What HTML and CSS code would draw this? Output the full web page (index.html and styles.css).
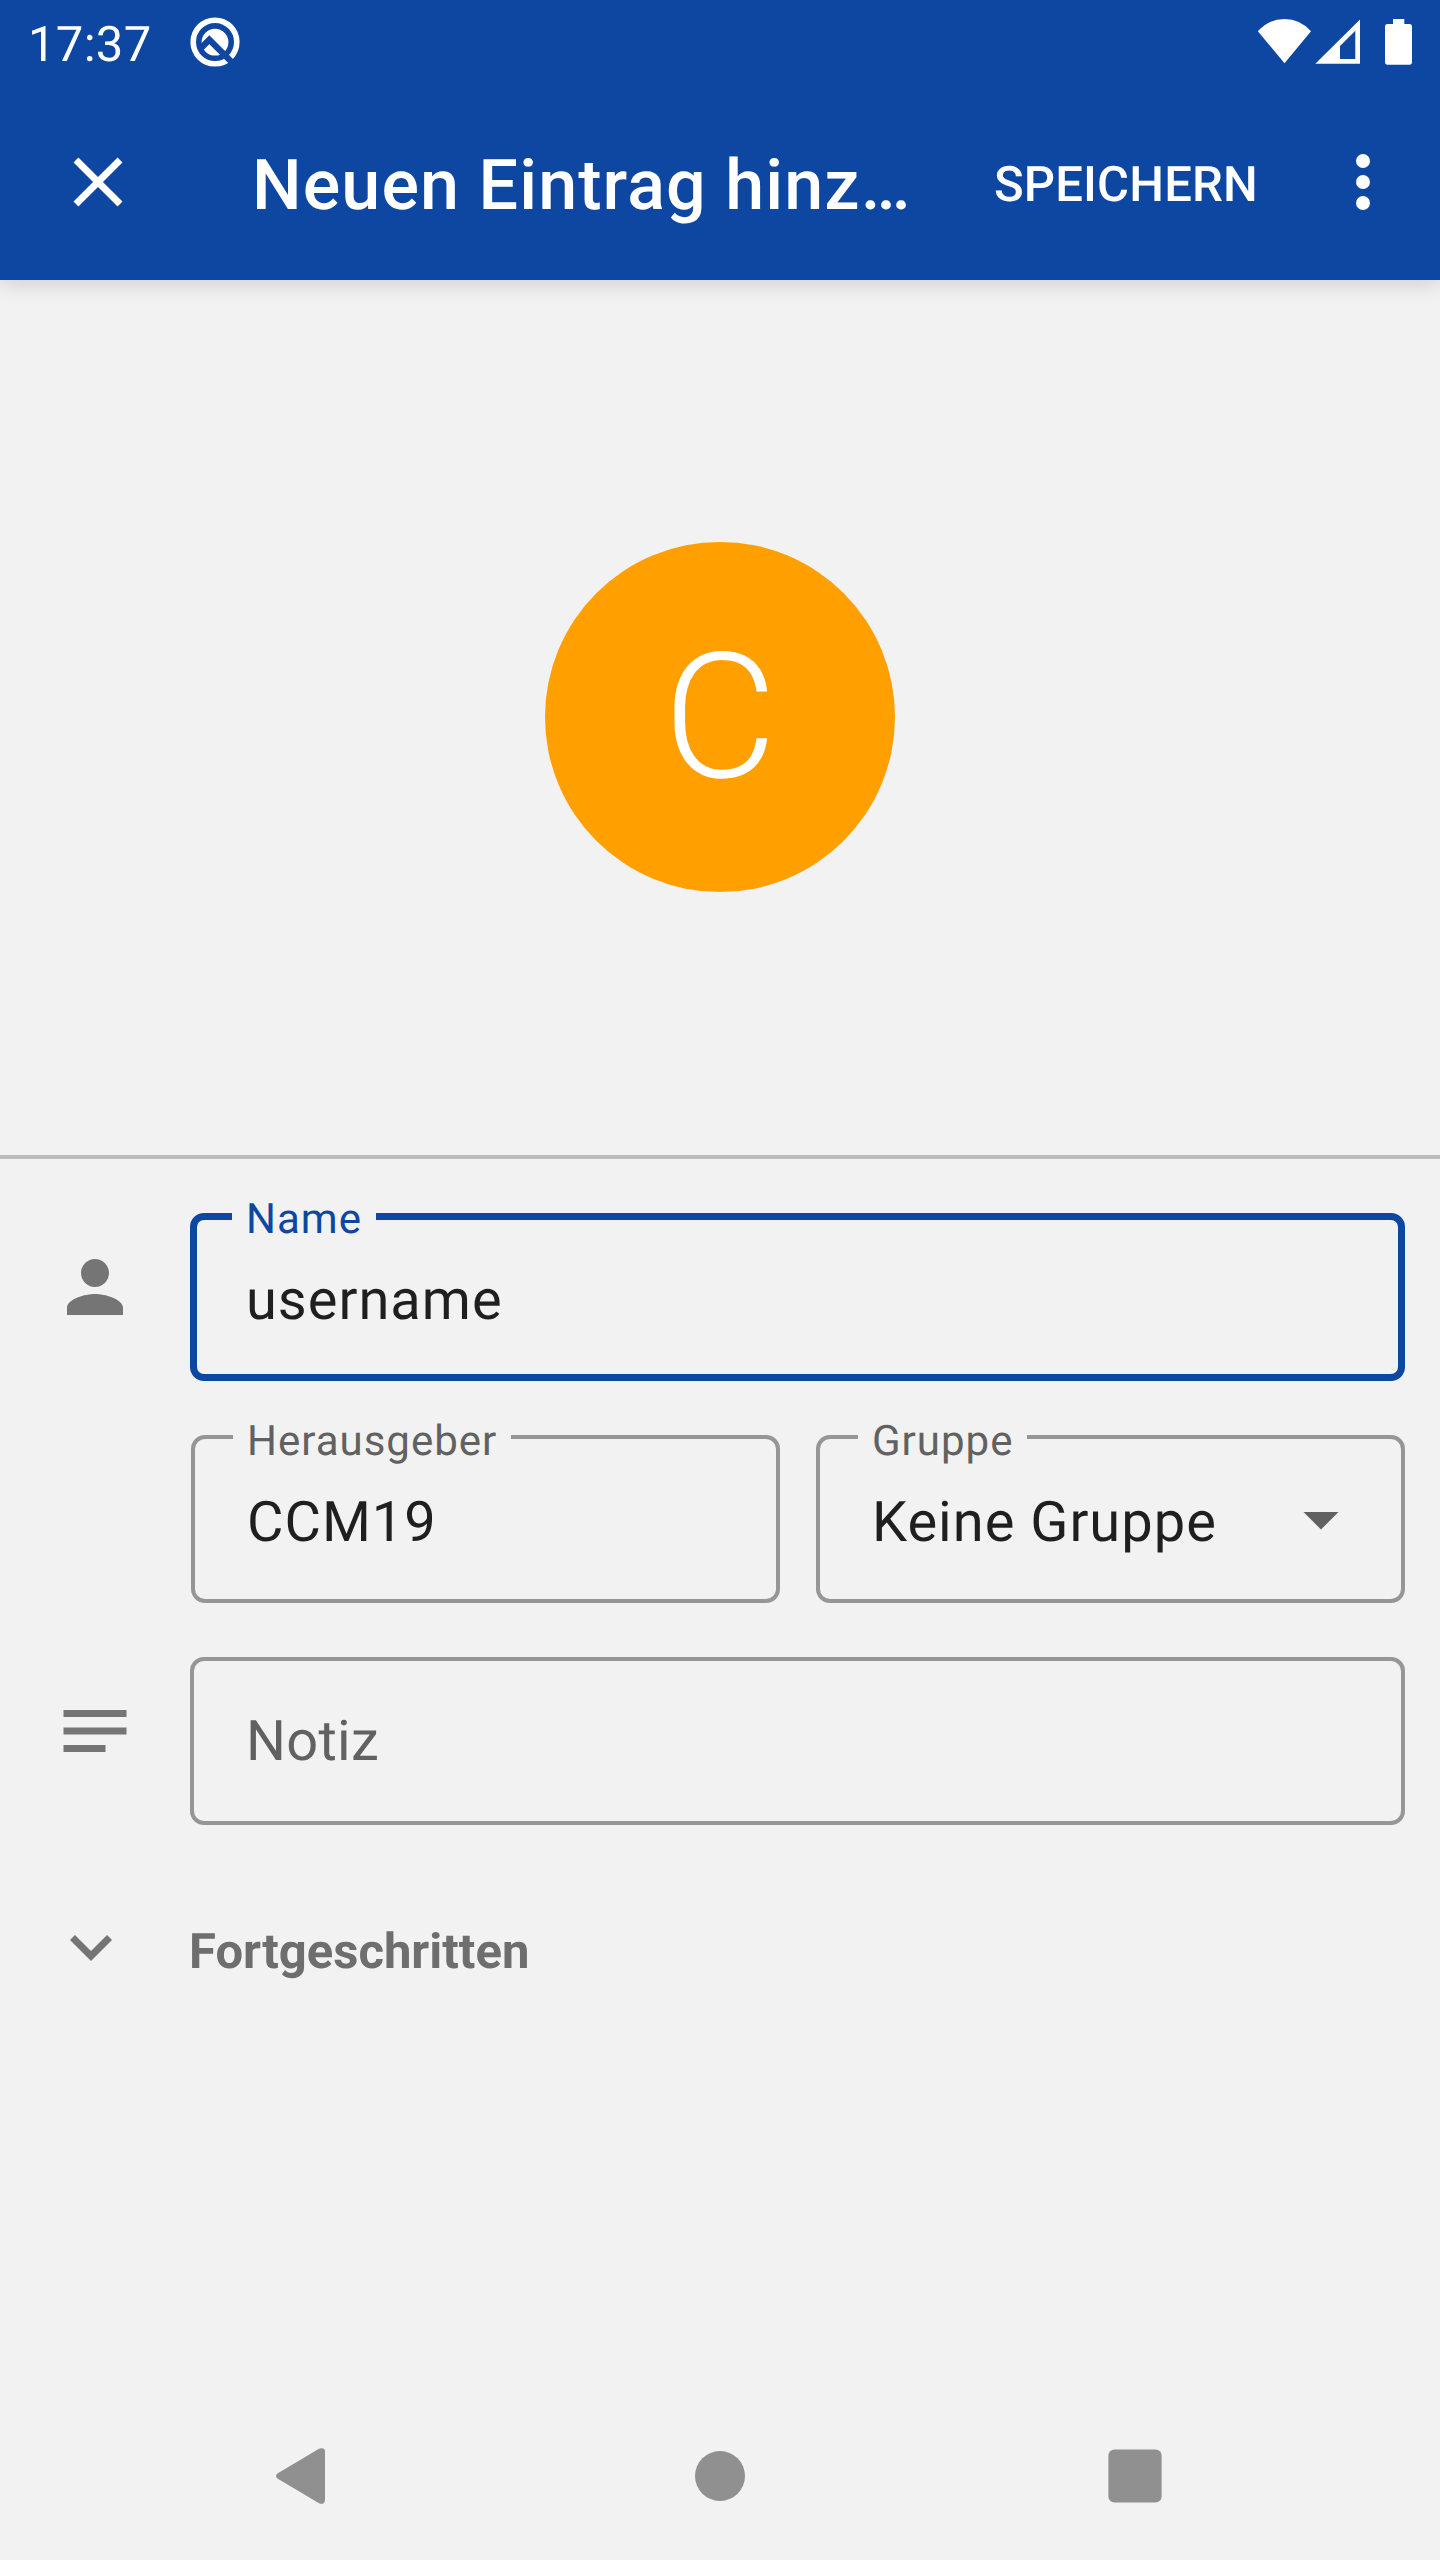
FILE: index.html
```html
<!DOCTYPE html>
<html lang="de">
<head>
<meta charset="utf-8">
<title>Neuen Eintrag hinzufügen</title>
<link rel="stylesheet" href="styles.css">
</head>
<body>
<div class="screen">
  <header class="header">
    <div class="status">
      <span class="time">17:37</span>
      <svg class="status-app" width="50" height="50" viewBox="0 0 50 50">
        <circle cx="25" cy="25" r="21.8" fill="none" stroke="#fff" stroke-width="5.6"/>
        <circle cx="25" cy="25.2" r="13.4" fill="#fff"/>
        <path d="M10.3 31.7L19.3 22.7L46.3 49.7" fill="none" stroke="#0d47a1" stroke-width="6.2"/>
      </svg>
      <svg class="status-icons" width="156" height="48" viewBox="1257 18 156 48" fill="#fff">
        <path d="M1284.5 63.3L1257.8 31.2Q1269 19 1284.5 19T1311 31.2Z"/>
        <path fill-rule="evenodd" d="M1315.3 63.7H1360V19.5ZM1340 59V46L1355.3 30.7V59Z"/>
        <path d="M1393 24V19H1404.3V24H1409.5Q1412 24 1412 26.5V62Q1412 64.7 1409.5 64.7H1387.5Q1385 64.7 1385 62V26.5Q1385 24 1387.5 24Z"/>
      </svg>
    </div>
    <div class="toolbar">
      <svg class="icon close" viewBox="0 0 24 24"><path d="M19 6.41L17.59 5 12 10.59 6.41 5 5 6.41 10.59 12 5 17.59 6.41 19 12 13.41 17.59 19 19 17.59 13.41 12z"/></svg>
      <h1 class="title">Neuen Eintrag hinz…</h1>
      <span class="save">SPEICHERN</span>
      <svg class="icon more" viewBox="0 0 24 24"><circle cx="12" cy="6" r="2"/><circle cx="12" cy="12" r="2"/><circle cx="12" cy="18" r="2"/></svg>
    </div>
  </header>

  <section class="hero">
    <div class="avatar">C</div>
  </section>

  <main class="form">
    <div class="row">
      <svg class="icon lead" viewBox="0 0 24 24"><path d="M12 12c2.21 0 4-1.79 4-4s-1.79-4-4-4-4 1.79-4 4 1.79 4 4 4zm0 2c-2.67 0-8 1.34-8 4v2h16v-2c0-2.66-5.33-4-8-4z"/></svg>
      <div class="field focused"><span class="label">Name</span><span class="value">username</span></div>
    </div>
    <div class="row pair">
      <div class="field"><span class="label">Herausgeber</span><span class="value">CCM19</span></div>
      <div class="field"><span class="label">Gruppe</span><span class="value">Keine Gruppe</span>
        <svg class="icon caret" viewBox="0 0 24 24"><path d="M7 10l5 5 5-5z"/></svg></div>
    </div>
    <div class="row">
      <svg class="icon lead" viewBox="0 0 24 24"><path d="M3 6h18v2H3zM3 11h18v2H3zM3 16h12v2H3z"/></svg>
      <div class="field"><span class="value hint">Notiz</span></div>
    </div>
    <div class="advanced">
      <svg class="icon" viewBox="0 0 24 24"><path d="M16.59 8.59L12 13.17 7.41 8.59 6 10l6 6 6-6z"/></svg>
      <span>Fortgeschritten</span>
    </div>
  </main>

  <nav class="nav">
    <svg width="50" height="56" viewBox="0 0 50 56"><path d="M43 .8Q45 -.4 47.2 .6T49 4V52Q49 55 47.2 55.6T43 55.2L1.8 30.8Q0 29.5 0 28T1.8 25.2Z"/></svg>
    <svg class="home" width="50" height="50" viewBox="0 0 50 50"><circle cx="25" cy="25" r="25"/></svg>
    <svg width="54" height="54" viewBox="0 0 54 54"><rect x=".4" y=".4" width="53.2" height="53.2" rx="6"/></svg>
  </nav>
</div>
</body>
</html>
```
FILE: styles.css
```css
* { box-sizing: border-box; }

body {
  margin: 0;
  background: #f2f2f2;
  font-family: Roboto, "Liberation Sans", sans-serif;
  text-rendering: geometricPrecision;
}

svg { display: block; flex: none; }

.screen {
  width: 1440px;
  height: 2560px;
  display: flex;
  flex-direction: column;
  overflow: hidden;
}

.icon { width: 84px; height: 84px; fill: currentColor; }

.header {
  height: 280px;
  background: #0d47a1;
  color: #fff;
  box-shadow: 0 4px 20px rgba(0, 0, 0, .15);
}

.status {
  height: 84px;
  display: flex;
  align-items: center;
  padding: 0 27px 0 28px;
}

.time {
  width: 162px;
  padding-top: 5px;
  font-size: 49px;
  line-height: 60px;
  letter-spacing: .3px;
}

.status-icons { margin-left: auto; }

.toolbar {
  height: 196px;
  display: flex;
  align-items: center;
  padding: 0 35px 0 56px;
}

.title {
  width: 742px;
  margin: 0 0 0 112px;
  padding-top: 8px;
  font-size: 70px;
  line-height: 84px;
  font-weight: 500;
  letter-spacing: 1.1px;
  white-space: nowrap;
}

.save {
  padding-top: 5px;
  font-size: 49px;
  line-height: 60px;
  font-weight: 500;
  letter-spacing: .15px;
}

.more { margin-left: auto; }

.hero {
  height: 879px;
  display: flex;
  justify-content: center;
  align-items: center;
  padding-bottom: 1px;
  border-bottom: 4px solid #bbbcbb;
}

.avatar {
  width: 350px;
  height: 350px;
  border-radius: 50%;
  background: #ffa000;
  color: #fff;
  font-size: 175px;
  font-weight: 300;
  line-height: 352px;
  text-align: center;
}

.form {
  display: flex;
  flex-direction: column;
  gap: 54px;
  padding: 54px 35px 0 0;
  color: #757575;
}

.row {
  height: 168px;
  display: flex;
  align-items: flex-start;
}

.lead { margin: 32px 53px 0; }

.pair { gap: 36px; padding-left: 191px; }

.field {
  position: relative;
  flex: 1;
  height: 168px;
  display: flex;
  align-items: center;
  justify-content: space-between;
  padding: 0 38px 0 52px;
  border: 4px solid #969696;
  border-radius: 14px;
}

.focused { border: 7px solid #0d47a1; padding-left: 49px; }

/* floating label, interrupts the outline */
.label {
  position: absolute;
  top: -18px;
  left: 38px;
  padding: 0 14px;
  background: #f2f2f2;
  color: #616161;
  font-size: 42px;
  line-height: 42px;
  letter-spacing: 1px;
}

.focused .label { top: -21px; left: 35px; color: #0d47a1; }

.value {
  padding-top: 6px;
  color: #1f1f1f;
  font-size: 56px;
  line-height: 68px;
  letter-spacing: 1px;
  white-space: nowrap;
}

.hint { padding-top: 0; color: #616161; letter-spacing: .3px; }

.caret { color: #616161; }

.advanced {
  display: flex;
  align-items: center;
  gap: 56px;
  margin-top: 26px;
  padding-left: 49px;
  color: #757575;
  font-size: 49px;
  line-height: 75px;
  font-weight: 700;
}

.advanced span { padding-top: 9px; color: #6e6e6e; }

.nav {
  height: 168px;
  margin-top: auto;
  display: flex;
  align-items: center;
  justify-content: space-between;
  padding: 0 278px 0 276px;
  fill: #909090;
}

.home { margin-left: 6px; }
```
